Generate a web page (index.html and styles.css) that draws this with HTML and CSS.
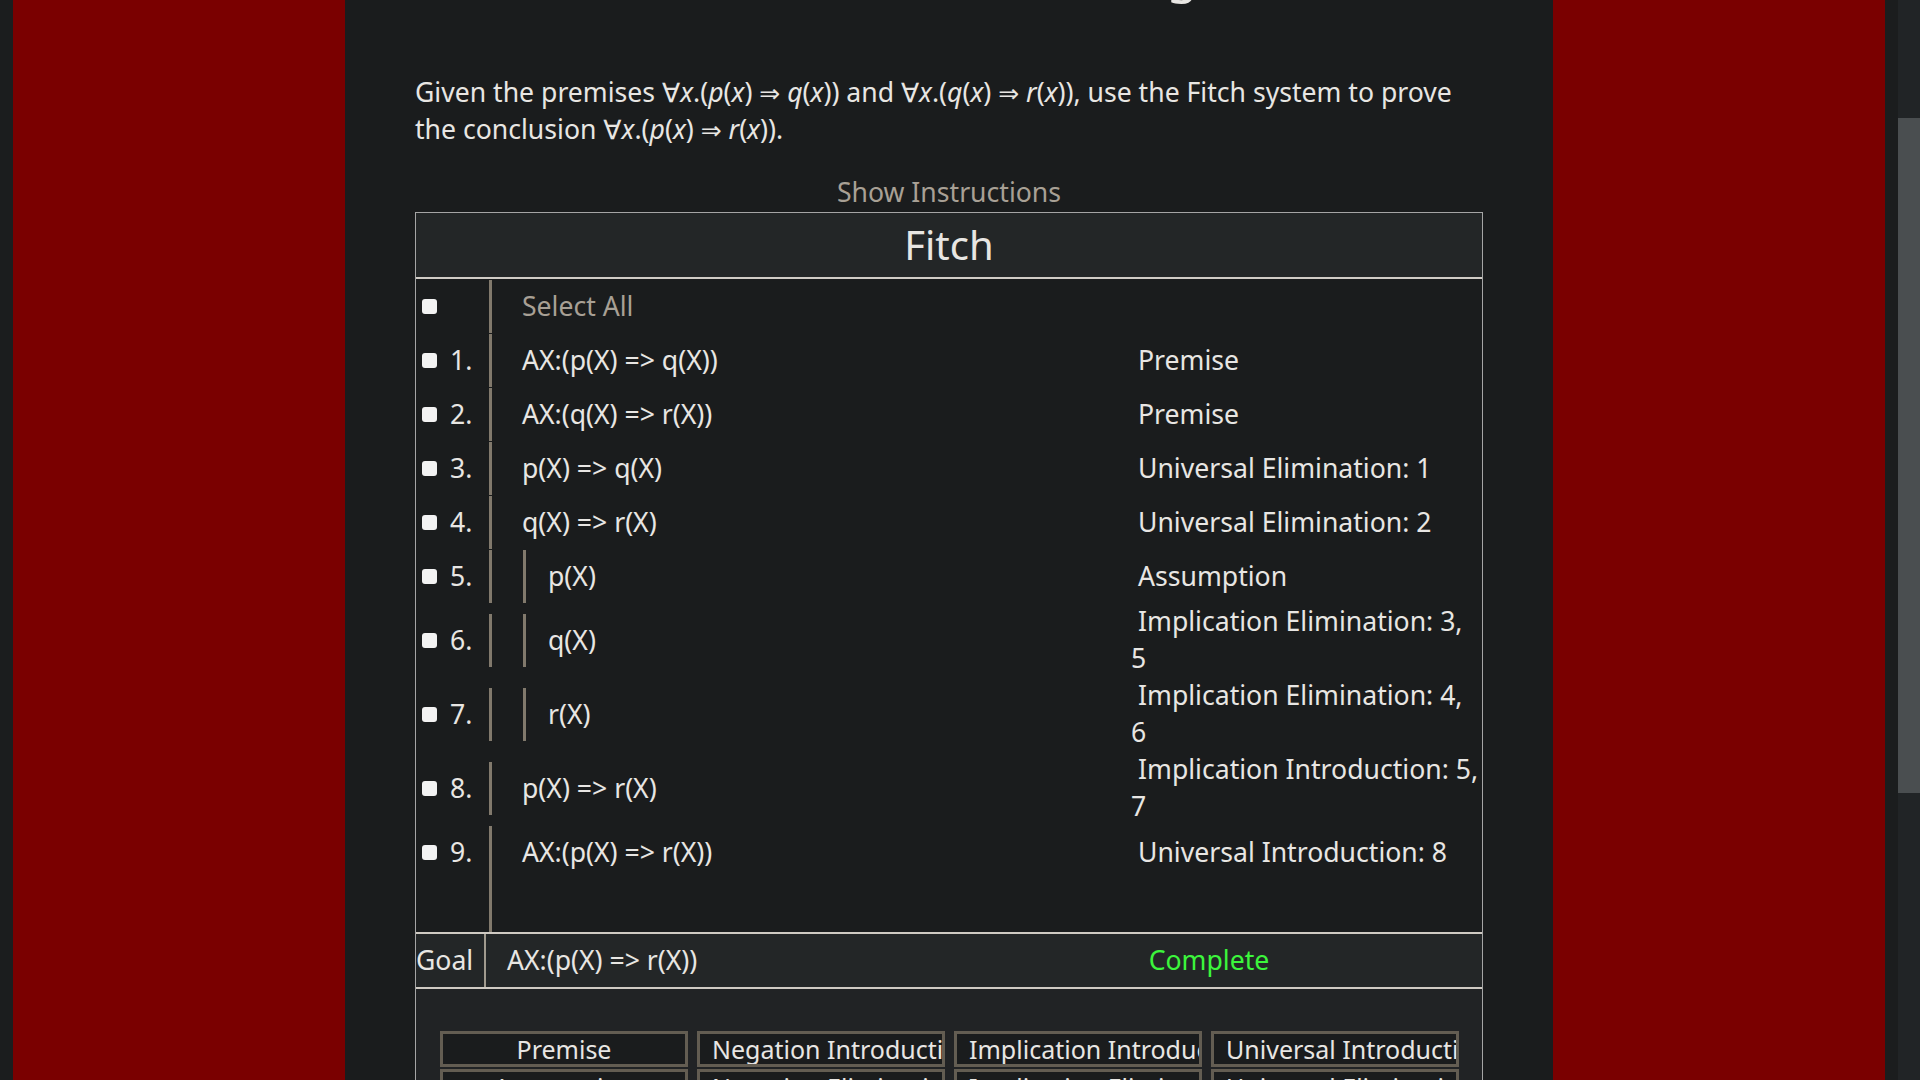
FILE: index.html
```html
<!DOCTYPE html>
<html lang="en">
<head>
<meta charset="utf-8">
<title>Fitch</title>
<link rel="stylesheet" href="styles.css">
</head>
<body>
<div class="page">
  <div class="band">
    <main class="column">
      <h1 class="title">Universal Reasoning</h1>
      <p class="prompt">Given the premises ∀<i>x</i>.(<i>p</i>(<i>x</i>) <span class="op">⇒</span> <i>q</i>(<i>x</i>)) and ∀<i>x</i>.(<i>q</i>(<i>x</i>) <span class="op">⇒</span> <i>r</i>(<i>x</i>)), use the Fitch system to prove the conclusion ∀<i>x</i>.(<i>p</i>(<i>x</i>) <span class="op">⇒</span> <i>r</i>(<i>x</i>)).</p>
      <div class="show">Show Instructions</div>
      <section class="fitch">
        <header class="fitch-head">Fitch</header>
        <div class="proof">
          <div class="row">
            <div class="sel"><span class="check"></span></div>
            <div class="formula"><span class="bar"></span><span class="text muted">Select All</span></div>
            <div class="just"></div>
          </div>
          <div class="row">
            <div class="sel"><span class="check"></span><span class="num">1.</span></div>
            <div class="formula"><span class="bar"></span><span class="text">AX:(p(X) =&gt; q(X))</span></div>
            <div class="just">Premise</div>
          </div>
          <div class="row">
            <div class="sel"><span class="check"></span><span class="num">2.</span></div>
            <div class="formula"><span class="bar"></span><span class="text">AX:(q(X) =&gt; r(X))</span></div>
            <div class="just">Premise</div>
          </div>
          <div class="row">
            <div class="sel"><span class="check"></span><span class="num">3.</span></div>
            <div class="formula"><span class="bar"></span><span class="text">p(X) =&gt; q(X)</span></div>
            <div class="just">Universal Elimination: 1</div>
          </div>
          <div class="row">
            <div class="sel"><span class="check"></span><span class="num">4.</span></div>
            <div class="formula"><span class="bar"></span><span class="text">q(X) =&gt; r(X)</span></div>
            <div class="just">Universal Elimination: 2</div>
          </div>
          <div class="row">
            <div class="sel"><span class="check"></span><span class="num">5.</span></div>
            <div class="formula"><span class="bar"></span><span class="bar"></span><span class="text">p(X)</span></div>
            <div class="just">Assumption</div>
          </div>
          <div class="row tall">
            <div class="sel"><span class="check"></span><span class="num">6.</span></div>
            <div class="formula"><span class="bar"></span><span class="bar"></span><span class="text">q(X)</span></div>
            <div class="just">Implication Elimination: 3,<br>5</div>
          </div>
          <div class="row tall">
            <div class="sel"><span class="check"></span><span class="num">7.</span></div>
            <div class="formula"><span class="bar"></span><span class="bar"></span><span class="text">r(X)</span></div>
            <div class="just">Implication Elimination: 4,<br>6</div>
          </div>
          <div class="row tall">
            <div class="sel"><span class="check"></span><span class="num">8.</span></div>
            <div class="formula"><span class="bar"></span><span class="text">p(X) =&gt; r(X)</span></div>
            <div class="just">Implication Introduction: 5,<br>7</div>
          </div>
          <div class="row">
            <div class="sel"><span class="check"></span><span class="num">9.</span></div>
            <div class="formula"><span class="bar"></span><span class="text">AX:(p(X) =&gt; r(X))</span></div>
            <div class="just">Universal Introduction: 8</div>
          </div>
          <div class="row filler">
            <div class="sel"></div>
            <div class="formula"><span class="bar"></span></div>
            <div class="just"></div>
          </div>
        </div>
        <div class="goal">
          <div class="goal-label">Goal</div>
          <div class="goal-formula">AX:(p(X) =&gt; r(X))</div>
          <div class="goal-status">Complete</div>
        </div>
        <div class="rules">
          <div class="rule">Premise</div>
          <div class="rule">Negation Introduction</div>
          <div class="rule">Implication Introduction</div>
          <div class="rule">Universal Introduction</div>
          <div class="rule">Assumption</div>
          <div class="rule">Negation Elimination</div>
          <div class="rule">Implication Elimination</div>
          <div class="rule">Universal Elimination</div>
        </div>
      </section>
    </main>
  </div>
</div>
<div class="scrollbar"><div class="thumb"></div></div>
</body>
</html>
```
FILE: styles.css
```css
* {
  box-sizing: border-box;
}

html,
body {
  margin: 0;
  height: 100%;
  overflow: hidden;
}

body {
  display: flex;
  background: #1b1d1e;
  color: #e8e6e3;
  font-family: "Noto Sans", "Open Sans", "DejaVu Sans", sans-serif;
  font-size: 26.6px;
}

.page {
  flex: 1;
  min-width: 0;
  padding: 0 13px;
  background: #1b1d1e;
}

.band {
  height: 100%;
  background: #7a0000;
}

.column {
  width: 1208px;
  height: 100%;
  margin: 0 auto;
  padding: 0 70px;
  background: #1a1c1d;
  overflow: hidden;
}

.scrollbar {
  width: 22px;
  flex: none;
  background: #212426;
  padding-top: 118px;
}

.thumb {
  height: 675px;
  background: #4a4e50;
}

.title {
  margin: -60px 0 0;
  font-size: 52px;
  font-weight: 400;
  line-height: 62.4px;
  text-align: center;
}

.prompt {
  margin: 72px 0 0;
  line-height: 36.6px;
}

.prompt i {
  font-style: italic;
}

.op {
  font-family: "DejaVu Sans", sans-serif;
  font-size: 25px;
  line-height: 0;
}

.show {
  margin-top: 26.5px;
  text-align: center;
  color: #a8a095;
  line-height: 36px;
}

.fitch {
  margin-top: 2px;
  border: 1px solid #a5a5a5;
}

.fitch-head {
  height: 66px;
  line-height: 64px;
  border-bottom: 2px solid #d0ccc6;
  background: #232627;
  text-align: center;
  font-size: 40px;
}

.proof {
  background: #1a1c1d;
}

.row {
  display: grid;
  grid-template-columns: 73px 642px 1fr;
  align-items: center;
  min-height: 54px;
}

.row.tall {
  min-height: 74px;
}

.row.filler {
  min-height: 53px;
}

.sel {
  display: flex;
  align-items: center;
  gap: 13px;
  padding-left: 6px;
}

.check {
  flex: none;
  width: 15px;
  height: 15px;
  border-radius: 3px;
  background: #f3f3f3;
}

.num {
  line-height: 36px;
}

.formula {
  display: flex;
  align-items: center;
  align-self: stretch;
}

.bar {
  flex: none;
  width: 3px;
  height: 53px;
  background: #81796c;
}

.filler .bar {
  height: 53px;
}

.bar + .bar {
  margin-left: 31px;
}

.formula .text {
  margin-left: 30px;
  line-height: 36px;
  white-space: nowrap;
}

.bar + .bar + .text {
  margin-left: 22px;
}

.muted {
  color: #a8a095;
}

.just {
  text-indent: 7px;
  line-height: 37px;
  white-space: nowrap;
}

.goal {
  display: grid;
  grid-template-columns: 70px 1fr 546px;
  border-top: 2px solid #cfcac3;
  border-bottom: 2px solid #cfcac3;
  background: #232627;
  line-height: 53px;
}

.goal-label {
  border-right: 2px solid #a09a8e;
  white-space: nowrap;
}

.goal-formula {
  padding-left: 21px;
}

.goal-status {
  text-align: center;
  color: #3cf53c;
}

.rules {
  display: grid;
  grid-template-columns: repeat(4, 248px);
  gap: 2px 9px;
  padding: 42px 0 40px 24px;
  background: #212325;
}

.rule {
  height: 36px;
  padding: 0 12px;
  border: 3px solid #635d52;
  background: #1a1c1d;
  font-size: 25px;
  line-height: 30px;
  text-align: center;
  white-space: nowrap;
  overflow: hidden;
}
```
